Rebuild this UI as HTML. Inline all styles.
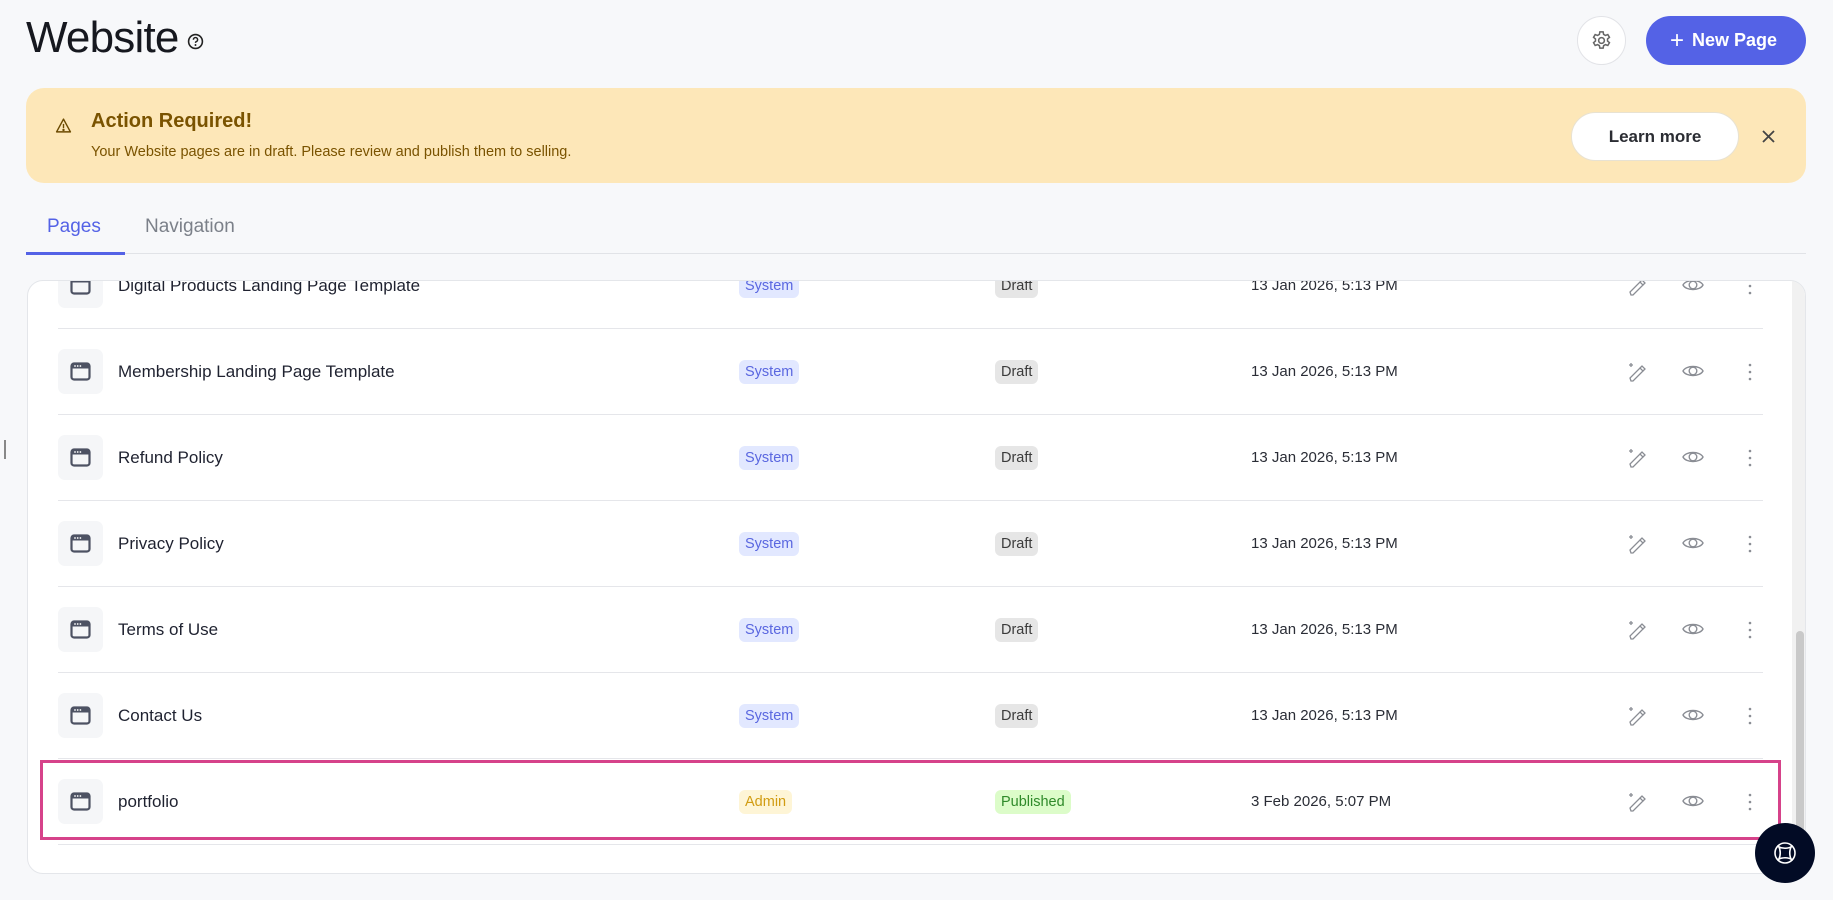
<!DOCTYPE html>
<html><head><meta charset="utf-8"><style>
*{box-sizing:border-box;margin:0;padding:0}
body{width:1833px;height:900px;background:#f7f8fa;font-family:"Liberation Sans",Arial,sans-serif;position:relative;overflow:hidden;color:#1f2230}
.abs{position:absolute}
h1{position:absolute;left:26px;top:13px;font-size:44px;font-weight:400;color:#16181f;letter-spacing:-0.8px;line-height:50px}
.banner{left:26px;top:88px;width:1780px;height:95px;background:#fde7b8;border-radius:18px}
.card{left:27px;top:280px;width:1779px;height:594px;background:#fff;border:1px solid #e4e6ea;border-radius:16px;overflow:hidden}
.row{position:absolute;left:30px;width:1705px;height:86px;border-bottom:1px solid #e5e6ea}
.ib{position:absolute;left:0;top:20px;width:45px;height:45px;background:#f5f6f8;border-radius:7px}
.ib svg{position:absolute;left:12px;top:12px}
.nm{position:absolute;left:60px;top:0;line-height:86px;font-size:17px;color:#1f2230}
.bd{position:absolute;top:31px;height:24px;line-height:24px;padding:0 6px;border-radius:6px;font-size:14.5px}
.sys{left:681px;background:#e2e8ff;color:#5a67e0}
.dr{left:937px;background:#e6e6e6;color:#3b3b3b}
.dt{position:absolute;left:1193px;top:0;line-height:86px;font-size:15px;color:#2a2d36}
.ic{position:absolute;top:32px}
</style></head><body>
<h1>Website</h1>
<svg class="abs" style="left:187px;top:33px" width="17" height="17" viewBox="0 0 16 16"><circle cx="8" cy="8" r="6.5" fill="none" stroke="#222" stroke-width="1.5"/><path d="M6 6.3a2 2 0 1 1 2.6 1.9c-.5.2-.6.5-.6 1.1" fill="none" stroke="#222" stroke-width="1.4"/><circle cx="8" cy="11.3" r=".9" fill="#222"/></svg>

<div class="abs" style="left:1577px;top:16px;width:49px;height:49px;border-radius:50%;background:#fff;border:1px solid #e2e3e7"></div>
<svg class="abs" style="left:1590px;top:29px" width="23" height="23" viewBox="0 0 24 24" fill="none" stroke="#666" stroke-width="1.6"><path d="M10.3 3h3.4l.5 2.6 1.9 1.1 2.5-.9 1.7 2.9-2 1.7v2.2l2 1.7-1.7 2.9-2.5-.9-1.9 1.1-.5 2.6h-3.4l-.5-2.6-1.9-1.1-2.5.9-1.7-2.9 2-1.7v-2.2l-2-1.7 1.7-2.9 2.5.9 1.9-1.1z"/><circle cx="12" cy="12" r="3"/></svg>
<div class="abs" style="left:1646px;top:16px;width:160px;height:49px;border-radius:25px;background:#5462e6;color:#fff;font-size:18px;font-weight:600;line-height:49px;padding-left:24px"><span style="font-size:24px;font-weight:300;vertical-align:-2px;margin-right:8px">+</span>New Page</div>

<div class="abs banner"></div>
<svg class="abs" style="left:55px;top:117px" width="17" height="17" viewBox="0 0 16 16" fill="none" stroke="#6b4a00" stroke-width="1.3"><path d="M8 2 L14.5 14 H1.5 Z" stroke-linejoin="round"/><path d="M8 6.5v4"/><circle cx="8" cy="12.2" r=".5" fill="#6b4a00"/></svg>
<div class="abs" style="left:91px;top:110px;font-size:20px;font-weight:600;color:#7a5300">Action Required!</div>
<div class="abs" style="left:91px;top:144px;font-size:14.5px;color:#7a5300">Your Website pages are in draft. Please review and publish them to selling.</div>
<div class="abs" style="left:1571px;top:112px;width:168px;height:49px;border-radius:25px;background:#fff;border:1px solid #e8e2d2;text-align:center;line-height:47px;font-size:17px;font-weight:700;color:#2b2d33">Learn more</div>
<svg class="abs" style="left:1762px;top:130px" width="13" height="13" viewBox="0 0 13 13" stroke="#444" stroke-width="1.8"><path d="M1 1L12 12M12 1L1 12"/></svg>

<div class="abs" style="left:47px;top:216px;font-size:19px;font-weight:500;color:#5462e6">Pages</div>
<div class="abs" style="left:145px;top:216px;font-size:19px;color:#7b8089">Navigation</div>
<div class="abs" style="left:26px;top:253px;width:1780px;height:1px;background:#e1e3e7"></div>
<div class="abs" style="left:26px;top:252px;width:99px;height:3px;background:#5462e6"></div>

<div class="abs" style="left:4px;top:440px;width:2px;height:19px;background:#888"></div>

<div class="abs card">
<div id="rows"></div>
<div class="abs" style="left:1764px;top:0;width:15px;height:594px;background:#f1f1f1"></div>
<div class="abs" style="left:1768px;top:350px;width:8px;height:240px;background:#c9c9c9;border-radius:4px"></div>
</div>

<div class="abs" style="left:40px;top:760px;width:1741px;height:80px;border:3px solid #d6428a"></div>
<div class="abs" style="left:1755px;top:823px;width:60px;height:60px;border-radius:50%;background:#020b25"></div>
<svg class="abs" style="left:1772px;top:840px" width="26" height="26" viewBox="0 0 26 26" fill="none" stroke="#fff" stroke-width="1.6"><circle cx="13" cy="13" r="10"/><path d="M5 6c5 3 11 3 16 0M5 20c5-3 11-3 16 0M6 5c3 5 3 11 0 16M20 5c-3 5-3 11 0 16"/></svg>

<script>
var rows=[["Digital Products Landing Page Template",0],["Membership Landing Page Template",0],["Refund Policy",0],["Privacy Policy",0],["Terms of Use",0],["Contact Us",0],["portfolio",1]];
var ico='<svg width="21" height="21" viewBox="0 0 21 21"><rect x="1.5" y="2.5" width="18" height="16" rx="2.5" fill="none" stroke="#4d5263" stroke-width="2.2"/><rect x="1.5" y="2.5" width="18" height="5" fill="#4d5263"/><circle cx="5" cy="5" r=".9" fill="#fff"/><circle cx="7.7" cy="5" r=".9" fill="#fff"/><circle cx="10.4" cy="5" r=".9" fill="#fff"/></svg>';
var act='<svg class="ic" style="left:1568px" width="22" height="22" viewBox="0 0 22 22" fill="none" stroke="#8a8d94" stroke-width="1.3"><path d="M5 20l-1-3 10-10 3 3-10 10z"/><path d="M14 7l2-2 3 3-2 2"/><path d="M5 2v4M3 4h4"/></svg><svg class="ic" style="left:1624px;top:34px" width="22" height="16" viewBox="0 0 22 16" fill="none" stroke="#8a8d94" stroke-width="1.4"><path d="M1 8c3-6 17-6 20 0c-3 6-17 6-20 0z"/><circle cx="11" cy="8" r="3.8"/></svg><svg class="ic" style="left:1690px;top:33px" width="4" height="20" viewBox="0 0 4 20" fill="#8a8d94"><circle cx="2" cy="3" r="1.3"/><circle cx="2" cy="10" r="1.3"/><circle cx="2" cy="17" r="1.3"/></svg>';
var h='';
rows.forEach(function(r,i){
 var top=-38+i*86;
 var b=r[1]?'<div class="bd" style="left:681px;background:#fef5d6;color:#d19c12">Admin</div><div class="bd" style="left:937px;background:#dcfcc9;color:#2f8a2a">Published</div>':'<div class="bd sys">System</div><div class="bd dr">Draft</div>';
 h+='<div class="row" style="top:'+top+'px"><div class="ib">'+ico+'</div><div class="nm">'+r[0]+'</div>'+b+'<div class="dt">'+(r[1]?'3 Feb 2026, 5:07 PM':'13 Jan 2026, 5:13 PM')+'</div>'+act+'</div>';
});
document.getElementById('rows').innerHTML=h;
</script>
</body></html>
